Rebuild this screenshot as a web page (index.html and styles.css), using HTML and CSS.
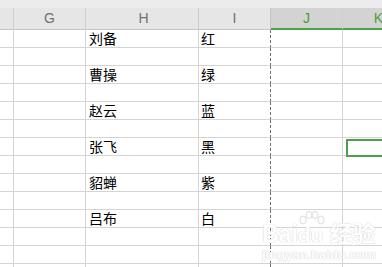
FILE: index.html
```html
<!DOCTYPE html>
<html lang="zh-CN">
<head>
    <meta charset="UTF-8">
    <title>Sheet</title>
    <link rel="stylesheet" href="styles.css">
</head>
<body>
    <div class="sheet">
        <div class="strip"></div>
        <div class="head">
            <div class="hc c-f"></div>
            <div class="hc c-g">G</div>
            <div class="hc c-h">H</div>
            <div class="hc c-i">I</div>
            <div class="hc c-j sel">J</div>
            <div class="hc c-k sel">K</div>
        </div>

        <div class="row"><div class="c c-f"></div><div class="c c-g"></div><div class="c c-h">刘备</div><div class="c c-i">红</div><div class="c c-j"></div><div class="c c-k"></div></div>
        <div class="row"><div class="c c-f"></div><div class="c c-g"></div><div class="c c-h"></div><div class="c c-i"></div><div class="c c-j"></div><div class="c c-k"></div></div>
        <div class="row"><div class="c c-f"></div><div class="c c-g"></div><div class="c c-h">曹操</div><div class="c c-i">绿</div><div class="c c-j"></div><div class="c c-k"></div></div>
        <div class="row"><div class="c c-f"></div><div class="c c-g"></div><div class="c c-h"></div><div class="c c-i"></div><div class="c c-j"></div><div class="c c-k"></div></div>
        <div class="row"><div class="c c-f"></div><div class="c c-g"></div><div class="c c-h">赵云</div><div class="c c-i">蓝</div><div class="c c-j"></div><div class="c c-k"></div></div>
        <div class="row"><div class="c c-f"></div><div class="c c-g"></div><div class="c c-h"></div><div class="c c-i"></div><div class="c c-j"></div><div class="c c-k"></div></div>
        <div class="row"><div class="c c-f"></div><div class="c c-g"></div><div class="c c-h">张飞</div><div class="c c-i">黑</div><div class="c c-j"></div><div class="c c-k"><div class="active"></div></div></div>
        <div class="row"><div class="c c-f"></div><div class="c c-g"></div><div class="c c-h"></div><div class="c c-i"></div><div class="c c-j"></div><div class="c c-k"></div></div>
        <div class="row"><div class="c c-f"></div><div class="c c-g"></div><div class="c c-h">貂蝉</div><div class="c c-i">紫</div><div class="c c-j"></div><div class="c c-k"></div></div>
        <div class="row"><div class="c c-f"></div><div class="c c-g"></div><div class="c c-h"></div><div class="c c-i"></div><div class="c c-j"></div><div class="c c-k"></div></div>
        <div class="row"><div class="c c-f"></div><div class="c c-g"></div><div class="c c-h">吕布</div><div class="c c-i">白</div><div class="c c-j"></div><div class="c c-k"></div></div>
        <div class="row"><div class="c c-f"></div><div class="c c-g"></div><div class="c c-h"></div><div class="c c-i"></div><div class="c c-j"></div><div class="c c-k"></div></div>
        <div class="row"><div class="c c-f"></div><div class="c c-g"></div><div class="c c-h"></div><div class="c c-i"></div><div class="c c-j"></div><div class="c c-k"></div></div>
        <div class="row"><div class="c c-f"></div><div class="c c-g"></div><div class="c c-h"></div><div class="c c-i"></div><div class="c c-j"></div><div class="c c-k"></div></div>

        <!-- watermark -->
        <div class="mark">
            <svg class="paw" width="28" height="16" viewBox="0 0 28 16">
                <g fill="#fff" stroke="#dcdcdc" stroke-width="1">
                    <ellipse cx="5" cy="9" rx="3" ry="4"/>
                    <ellipse cx="11" cy="4" rx="3" ry="3.5"/>
                    <ellipse cx="17" cy="4" rx="3" ry="3.5"/>
                    <ellipse cx="23" cy="9" rx="3" ry="4"/>
                </g>
            </svg>
            <div class="mark-logo">Bai<span class="du">du</span> 经验</div>
            <div class="mark-url">jingyan.baidu.com</div>
        </div>
    </div>
</body>
</html>
```

FILE: styles.css
```css
body {
    margin: 0;
    padding: 0;
    background-color: #fff;
    font-family: "Noto Sans CJK SC", "Liberation Sans", sans-serif;
}
.sheet {
    position: relative;
    width: 382px;
    height: 267px;
    overflow: hidden;
}
.strip {
    height: 8px;
    background-color: #ececec;
}
.head {
    display: flex;
    height: 22px;
    background-color: #e6e6e6;
}
.hc {
    box-sizing: border-box;
    flex-shrink: 0;
    height: 22px;
    border-right: 1px solid #cfcfcf;
    border-bottom: 1px solid #c4c4c4;
    font-family: "Liberation Sans", sans-serif;
    font-size: 14px;
    line-height: 21px;
    color: #707070;
    text-align: center;
}
.hc.sel {
    background-color: #d3d3d3;
    border-bottom: 2px solid #4ba34b;
    color: #4a9e3a;
}
.hc.c-i {
    border-right-color: #c4c4c4;
}
.row {
    display: flex;
    height: 18px;
}
.c {
    box-sizing: border-box;
    flex-shrink: 0;
    height: 18px;
    border-right: 1px solid #d4d4d4;
    border-bottom: 1px solid #d4d4d4;
    padding-left: 2px;
    font-size: 14px;
    line-height: 17px;
    color: #000;
    white-space: nowrap;
}
.c-f { width: 14px; }
.c-g { width: 72px; }
.c-h { width: 113px; padding-left: 3px; }
.c-i { width: 72px; }
.c-j { width: 72px; }
.c-k { width: 72px; }
.c.c-i {
    border-right: 1px dashed #6e6e6e;
}
.active {
    height: 14px;
    margin: 1px 0 0 1px;
    border: 2px solid #4f9f4f;
}
.mark {
    position: absolute;
    left: 262px;
    top: 211px;
    width: 120px;
    color: #fff;
    text-shadow: 0 0 1px #d0d0d0, 0 0 1px #d0d0d0;
}
.paw {
    display: block;
    margin-left: 36px;
}
.mark-logo {
    margin-top: -4px;
    font-family: "Liberation Sans", "Noto Sans CJK SC", sans-serif;
    font-size: 23px;
    font-weight: bold;
    line-height: 22px;
    white-space: nowrap;
}
.mark-logo .du {
    font-size: 21px;
}
.mark-url {
    font-family: "Liberation Sans", sans-serif;
    font-size: 13px;
    font-weight: bold;
    line-height: 14px;
    margin-top: 2px;
    white-space: nowrap;
}
```
